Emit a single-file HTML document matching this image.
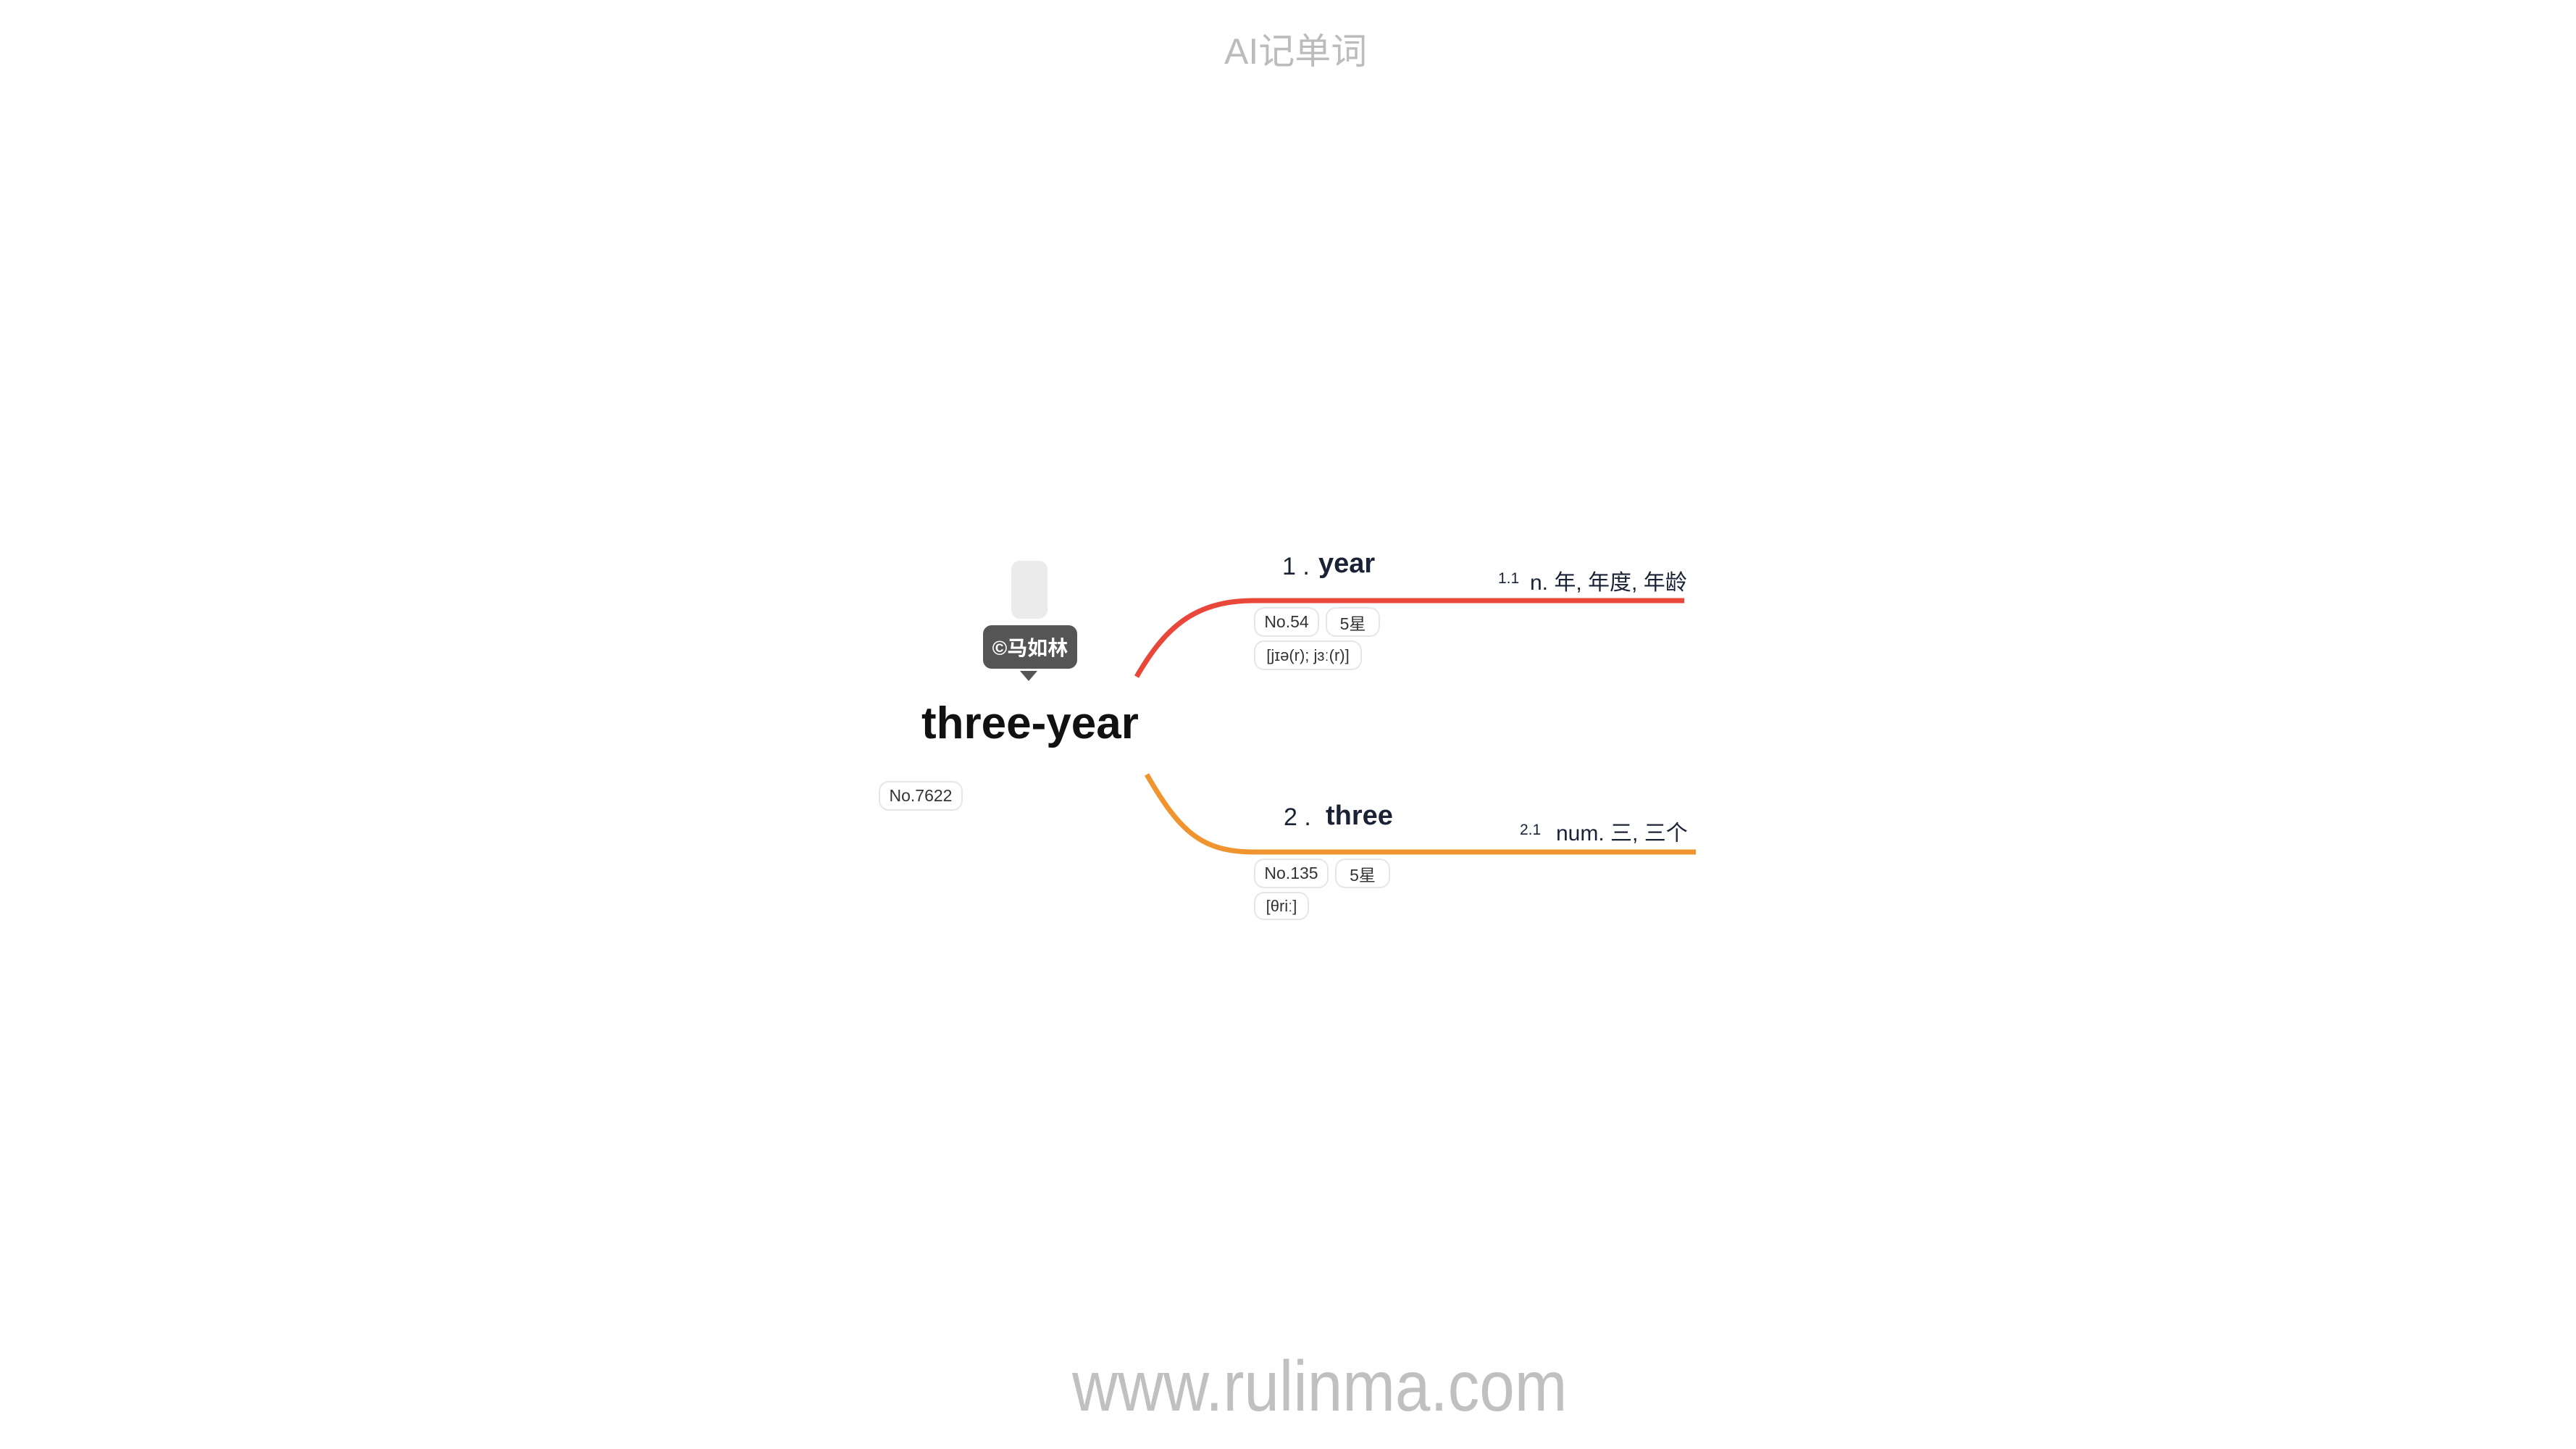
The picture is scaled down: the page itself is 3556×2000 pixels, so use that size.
<!DOCTYPE html>
<html><head><meta charset="utf-8"><style>
html,body{margin:0;padding:0;background:#fff;}
body{width:3556px;height:2000px;position:relative;overflow:hidden;font-family:"Liberation Sans","Noto Sans CJK SC",sans-serif;}
#w{position:absolute;left:0;top:0;width:3556px;height:2000px;transform:translate(-12px,-3px);}
.a{position:absolute;white-space:nowrap;}
.pill{position:absolute;box-sizing:border-box;border:2px solid #e6e6e6;border-radius:14px;font-size:23px;color:#333;display:flex;align-items:center;justify-content:center;}
</style></head><body><div id="w">
<div class="a" style="left:1702px;top:34px;font-size:50px;color:#bcbcbc;">AI记单词</div>
<div class="a" style="left:1492px;top:1860px;font-size:98px;color:#c0c0c0;transform:scaleX(0.89);transform-origin:0 0;">www.rulinma.com</div>

<svg class="a" style="left:0;top:0" width="3556" height="2000">
<path d="M1581 937 C1620 870,1660 832,1743 832 L2337 832" fill="none" stroke="#e8473a" stroke-width="7"/>
<path d="M1595 1072 C1640 1150,1670 1179,1743 1179 L2353 1179" fill="none" stroke="#f0942f" stroke-width="7"/>
<path d="M1420 929 L1444 929 L1432 943 Z" fill="#555"/>
</svg>

<div class="a" style="left:1408px;top:777px;width:50px;height:80px;background:#ebebeb;border-radius:12px;"></div>
<div class="a" style="left:1369px;top:866px;width:130px;height:60px;background:#555;border-radius:12px;color:#fff;font-size:28px;font-weight:bold;display:flex;align-items:center;justify-content:center;">©马如林</div>
<div class="a" style="left:1284px;top:966px;font-size:62px;font-weight:bold;color:#111;">three-year</div>
<div class="pill" style="left:1225px;top:1081px;width:116px;height:41px;">No.7622</div>

<div class="a" style="left:1782px;top:766px;font-size:34px;color:#1a2236;">1 .</div>
<div class="a" style="left:1832px;top:760px;font-size:38px;font-weight:bold;color:#1a2236;">year</div>
<div class="a" style="left:2080px;top:790px;font-size:21px;color:#1a2236;">1.1</div>
<div class="a" style="left:2124px;top:782px;font-size:30px;color:#1a2236;">n. 年, 年度, 年龄</div>
<div class="pill" style="left:1743px;top:841px;width:90px;height:41px;">No.54</div>
<div class="pill" style="left:1842px;top:841px;width:75px;height:41px;">5星</div>
<div class="pill" style="left:1743px;top:887px;width:149px;height:41px;font-size:22px;">[jɪə(r); jɜː(r)]</div>

<div class="a" style="left:1784px;top:1112px;font-size:34px;color:#1a2236;">2 .</div>
<div class="a" style="left:1842px;top:1108px;font-size:38px;font-weight:bold;color:#1a2236;">three</div>
<div class="a" style="left:2110px;top:1137px;font-size:21px;color:#1a2236;">2.1</div>
<div class="a" style="left:2160px;top:1128px;font-size:30px;color:#1a2236;">num. 三, 三个</div>
<div class="pill" style="left:1743px;top:1188px;width:103px;height:41px;">No.135</div>
<div class="pill" style="left:1855px;top:1188px;width:76px;height:41px;">5星</div>
<div class="pill" style="left:1743px;top:1234px;width:76px;height:39px;font-size:22px;">[θriː]</div>
</div></body></html>
